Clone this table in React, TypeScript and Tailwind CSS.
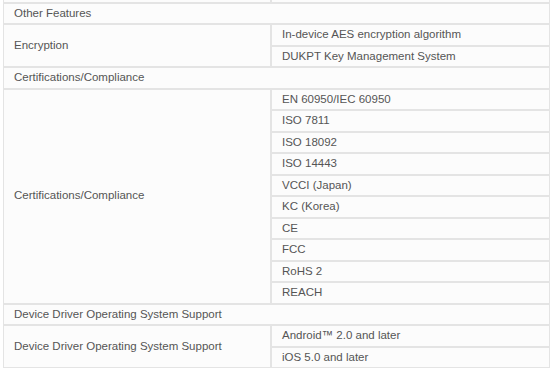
const rows: { label: string; values: string[] }[] = [
  { label: 'Encryption', values: ['In-device AES encryption algorithm', 'DUKPT Key Management System'] },
];

const certs = [
  'EN 60950/IEC 60950',
  'ISO 7811',
  'ISO 18092',
  'ISO 14443',
  'VCCI (Japan)',
  'KC (Korea)',
  'CE',
  'FCC',
  'RoHS 2',
  'REACH',
];

const drivers = ['Android™ 2.0 and later', 'iOS 5.0 and later'];

const td = 'border border-[#e4e4e4] px-[10px] py-[2px] leading-[15.47px] align-middle';

const Header: React.FC<{ title: string }> = ({ title }) => (
  <tr>
    <td colSpan={2} className={td}>
      {title}
    </td>
  </tr>
);

const Group: React.FC<{ label: string; values: string[] }> = ({ label, values }) => (
  <>
    {values.map((v, i) => (
      <tr key={i}>
        {i === 0 && (
          <td rowSpan={values.length} className={td}>
            {label}
          </td>
        )}
        <td className={td}>{v}</td>
      </tr>
    ))}
  </>
);

export default function App() {
  return (
    <div className="w-[554px] h-[370px] overflow-hidden bg-white">
      <table
        className="ml-[3px] mt-[-18.47px] w-[547px] border-separate border-spacing-0 bg-[#fcfcfc] text-[11.5px] text-[#555]"
        style={{ fontFamily: '"Liberation Sans", Arial, sans-serif' }}
      >
        <colgroup>
          <col className="w-[268px]" />
          <col />
        </colgroup>
        <tbody>
          <tr>
            <td className={td}>&nbsp;</td>
            <td className={td}>&nbsp;</td>
          </tr>
          <Header title="Other Features" />
          {rows.map((r) => (
            <Group key={r.label} label={r.label} values={r.values} />
          ))}
          <Header title="Certifications/Compliance" />
          <Group label="Certifications/Compliance" values={certs} />
          <Header title="Device Driver Operating System Support" />
          <Group label="Device Driver Operating System Support" values={drivers} />
        </tbody>
      </table>
    </div>
  );
}
